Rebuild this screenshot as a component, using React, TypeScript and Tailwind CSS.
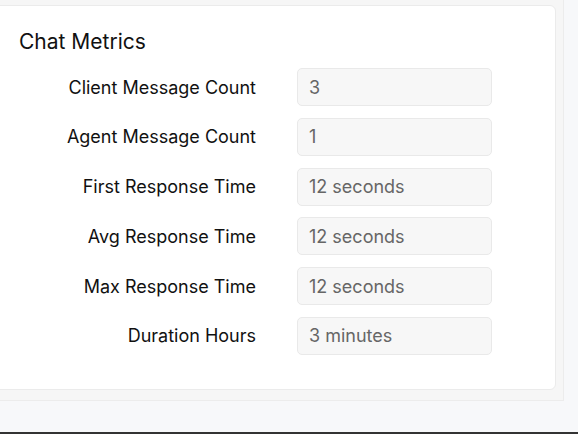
import React from "react";

const rows = [
  { label: "Client Message Count", value: "3" },
  { label: "Agent Message Count", value: "1" },
  { label: "First Response Time", value: "12 seconds" },
  { label: "Avg Response Time", value: "12 seconds" },
  { label: "Max Response Time", value: "12 seconds" },
  { label: "Duration Hours", value: "3 minutes" },
];

export default function App() {
  return (
    <div
      className="relative h-[434px] w-[578px] overflow-hidden bg-[#f7f8fa]"
      style={{ fontFamily: "Inter, 'Noto Sans', sans-serif" }}
    >
      <div className="h-[401px] w-[564px] border-b border-r border-[#ececec] bg-[#f6f6f6] pt-[5px] pr-[7px]">
        <div className="ml-[-8px] h-[385px] rounded-[6px] border border-[#ebebeb] bg-white pl-[26px] pt-[21px]">
          <h2 className="text-[21px] leading-[30px] text-[#111]">Chat Metrics</h2>
          <div className="mt-[11px] flex flex-col gap-[11.8px]">
            {rows.map((r) => (
              <div key={r.label} className="flex items-center">
                <div className="w-[237px] whitespace-nowrap text-right text-[18px] text-[#111]">{r.label}</div>
                <div className="ml-[41px] flex h-[38px] w-[195px] items-center rounded-[5px] border border-[#e9e9e9] bg-[#f7f7f7] px-[11px] text-[18px] text-[#666]">
                  {r.value}
                </div>
              </div>
            ))}
          </div>
        </div>
      </div>
      <div className="absolute bottom-0 left-0 h-[2px] w-full bg-[#333]" />
    </div>
  );
}
